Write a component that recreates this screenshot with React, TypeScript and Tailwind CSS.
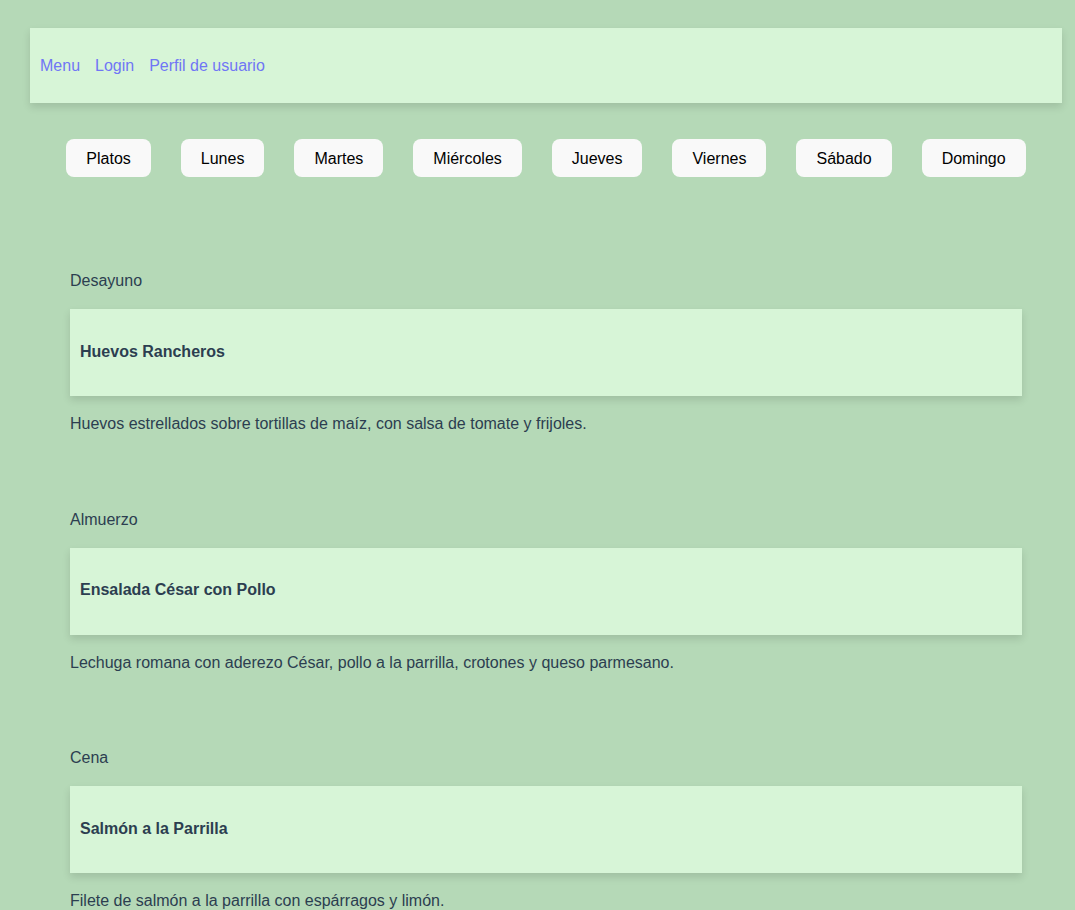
import React from "react";

const days = ["Platos", "Lunes", "Martes", "Miércoles", "Jueves", "Viernes", "Sábado", "Domingo"];

const meals = [
  {
    label: "Desayuno",
    name: "Huevos Rancheros",
    desc: "Huevos estrellados sobre tortillas de maíz, con salsa de tomate y frijoles.",
  },
  {
    label: "Almuerzo",
    name: "Ensalada César con Pollo",
    desc: "Lechuga romana con aderezo César, pollo a la parrilla, crotones y queso parmesano.",
  },
  {
    label: "Cena",
    name: "Salmón a la Parrilla",
    desc: "Filete de salmón a la parrilla con espárragos y limón.",
  },
];

const App = () => {
  return (
    <div className="min-h-[910px] bg-[#b5d9b7] text-[#2c3e50] font-['Liberation_Sans',Arial,sans-serif] text-[16px] leading-[18px] pt-[28px] pl-[30px] pb-[10px] overflow-hidden">
      <div className="w-[1032px]">
        {/* barra de navegación */}
        <nav className="h-[75px] bg-[#d7f5d7] shadow-[0_4px_8px_rgba(0,0,0,0.12)] flex items-center gap-[15px] px-[10px]">
          <a className="text-[#7076f5]">Menu</a>
          <a className="text-[#7076f5]">Login</a>
          <a className="text-[#7076f5]">Perfil de usuario</a>
        </nav>

        <div className="flex justify-center gap-[30px] mt-[36px]">
          {days.map((d) => (
            <button
              key={d}
              className="h-[38px] px-[20px] pt-[1px] rounded-[8px] bg-[#f9f9f9] text-black"
            >
              {d}
            </button>
          ))}
        </div>

        <div className="px-[40px] mt-[94px]">
          {meals.map((m) => (
            <section key={m.label} className="mb-[76.5px]">
              <p className="pt-[1px] leading-[18px]">{m.label}</p>
              <div className="mt-[19px] h-[87px] pb-[2px] bg-[#d7f5d7] shadow-[0_4px_8px_rgba(0,0,0,0.12)] flex items-center px-[10px]">
                <h3 className="font-bold">{m.name}</h3>
              </div>
              <p className="mt-[18px] pt-[1px]">{m.desc}</p>
            </section>
          ))}
        </div>
      </div>
    </div>
  );
};

export default App;
